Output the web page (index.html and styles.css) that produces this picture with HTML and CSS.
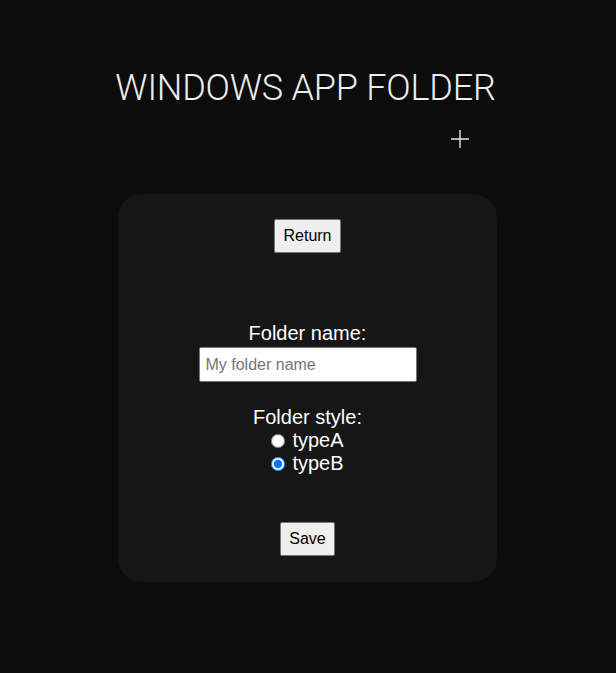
FILE: index.html
```html
<!DOCTYPE html>
<html>
<head>
<meta charset="utf-8">
<link rel="stylesheet" href="styles.css">
</head>
<body>
<div class="page">
  <h1 class="title">WINDOWS APP FOLDER</h1>
  <div class="plus-row"><span class="plus">
    <svg width="20" height="20" viewBox="0 0 20 20"><path d="M10 1V19M1 10H19" stroke="#e6e6e6" stroke-width="1.4" fill="none"/></svg>
  </span></div>
  <div class="card">
    <button class="btn">Return</button>
    <div class="form">
      <label class="label" for="fname">Folder name:</label>
      <input id="fname" class="input" type="text" placeholder="My folder name">
      <div class="label style-label">Folder style:</div>
      <label class="radio"><input type="radio" name="st">typeA</label>
      <label class="radio"><input type="radio" name="st" checked>typeB</label>
    </div>
    <button class="btn save">Save</button>
  </div>
</div>
</body>
</html>
```
FILE: styles.css
```css
html, body {
  margin: 0;
  padding: 0;
  background: #0c0c0c;
}
.page {
  display: flex;
  flex-direction: column;
  align-items: center;
  padding-top: 65px;
  font-family: "Liberation Sans", Arial, sans-serif;
}
.title {
  margin: 0;
  padding-right: 5px;
  font-family: Roboto, sans-serif;
  font-weight: 300;
  font-size: 36px;
  line-height: 46px;
  letter-spacing: -0.2px;
  color: #ececec;
}
.plus-row {
  width: 379px;
  display: flex;
  justify-content: flex-end;
  padding-right: 28px;
  box-sizing: border-box;
  margin-top: 18px;
  height: 20px;
}
.plus svg { display: block; }
.card {
  margin-top: 45px;
  margin-right: 1px;
  width: 379px;
  height: 388px;
  box-sizing: border-box;
  background: #161616;
  border-radius: 24px;
  display: flex;
  flex-direction: column;
  align-items: center;
  padding-top: 25px;
}
.btn {
  font-family: "Liberation Sans", Arial, sans-serif;
  font-size: 16px;
  background: #efefef;
  color: #000;
  border: 1px solid #767676;
  border-radius: 2px;
  padding: 0 8px;
  height: 34px;
}
.form {
  margin-top: 69px;
  display: flex;
  flex-direction: column;
  align-items: center;
  color: #fff;
  font-size: 20px;
  line-height: 23px;
}
.label { display: block; }
.input {
  width: 218px;
  height: 35px;
  box-sizing: border-box;
  font-family: "Liberation Sans", Arial, sans-serif;
  font-size: 16px;
  padding: 1px 6px;
  border: 1px solid #767676;
  border-radius: 2px;
  background: #fff;
  margin-top: 2px;
}
.input::placeholder { color: #757575; }
.style-label { margin-top: 24px; }
.radio {
  display: flex;
  align-items: center;
  line-height: 23px;
}
.radio input {
  margin: 0 7px 0 0;
  width: 14px;
  height: 14px;
}
.save {
  margin-top: 47px;
}
```
